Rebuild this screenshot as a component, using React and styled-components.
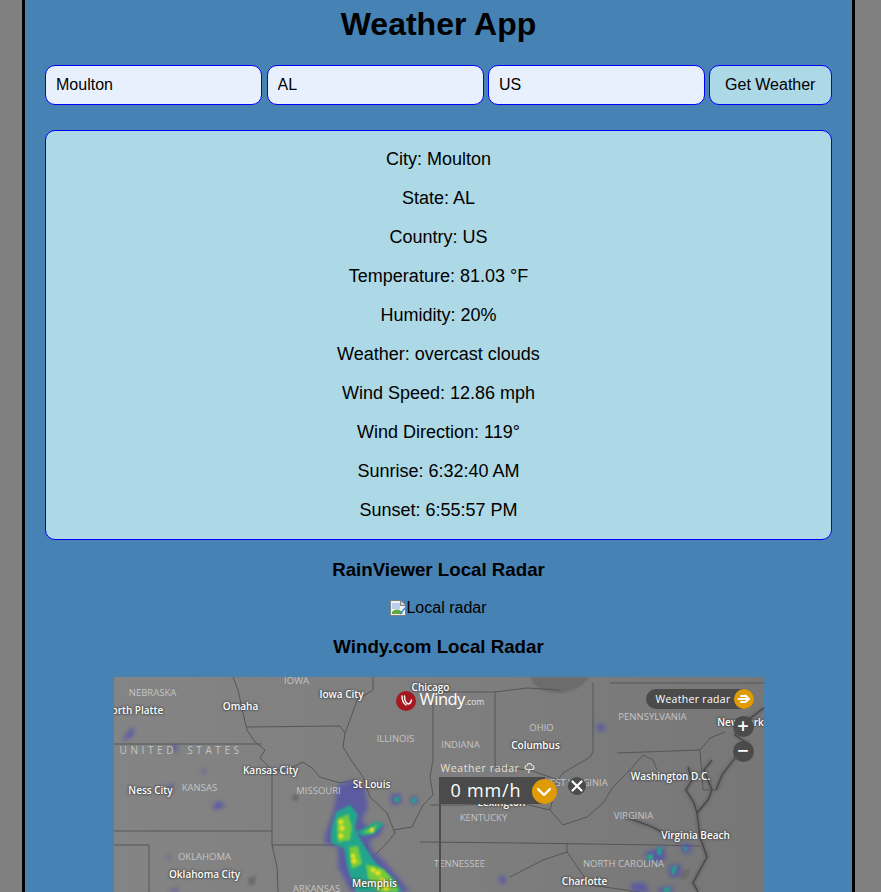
import React from 'react';
import styled, { createGlobalStyle } from 'styled-components';

const GlobalStyle = createGlobalStyle`
    html, body {
        margin: 0;
        height: 892px;
        overflow: hidden;
        background-color: #808080;
        font-family: "Liberation Sans", Arial, sans-serif;
    }
`

const readings = [
    'City: Moulton',
    'State: AL',
    'Country: US',
    'Temperature: 81.03 °F',
    'Humidity: 20%',
    'Weather: overcast clouds',
    'Wind Speed: 12.86 mph',
    'Wind Direction: 119°',
    'Sunrise: 6:32:40 AM',
    'Sunset: 6:55:57 PM',
]

// x / y are the label centres, relative to the map's top left corner
const cities = [
    ['North Platte', 20, 33],
    ['Omaha', 127, 29],
    ['Iowa City', 228, 17],
    ['Chicago', 317, 10],
    ['Columbus', 422, 68],
    ['Kansas City', 157, 93],
    ['Ness City', 37, 113],
    ['St Louis', 258, 107],
    ['Lexington', 388, 125],
    ['Washington D.C.', 557, 99],
    ['Virginia Beach', 582, 158],
    ['New York', 627, 45],
    ['Oklahoma City', 91, 197],
    ['Memphis', 261, 206],
    ['Charlotte', 471, 204],
]

const states = [
    ['NEBRASKA', 39, 16],
    ['IOWA', 183, 4],
    ['ILLINOIS', 282, 62],
    ['INDIANA', 347, 68],
    ['OHIO', 428, 51],
    ['PENNSYLVANIA', 539, 40],
    ['KANSAS', 86, 111],
    ['MISSOURI', 205, 114],
    ['WEST VIRGINIA', 461, 106],
    ['KENTUCKY', 370, 141],
    ['VIRGINIA', 520, 139],
    ['OKLAHOMA', 91, 180],
    ['TENNESSEE', 346, 187],
    ['NORTH CAROLINA', 510, 187],
    ['ARKANSAS', 203, 212],
]

const borders = [
    'M233 677 L238 690 L243 713 L247 730 L255 742 L265 750 L260 758 L272 770 L272 845',
    'M114 744 L262 744',
    'M247 727 L340 726 L345 733',
    'M272 770 L287 770 L303 762 L312 768 L320 777 L340 783 L355 780',
    'M373 677 L373 690 L357 700 L350 720 L345 733 L343 747 L353 763 L363 777 L370 797 L387 813 L395 833 L387 843 L370 860 L385 877 L400 890',
    'M114 831 L272 831',
    'M114 845 L149 845 L149 892',
    'M272 845 L367 845 L370 860',
    'M272 845 L277 867 L278 892',
    'M433 703 L433 760 L430 777 L433 795 L423 805 L412 827 L393 830',
    'M420 842 L520 843 L657 845 L700 846',
    'M437 692 L495 692 L527 688 L560 690',
    'M495 692 L495 753 L495 767',
    'M593 683 L593 752 L590 757 L563 773 L558 780 L550 810 L563 825 L587 817 L603 803 L613 787 L627 773 L643 755 L653 760 L657 770',
    'M617 753 L700 750 L703 790 L717 790',
    'M430 805 L463 805 L520 803 L550 810',
    'M495 767 L530 770 L558 780',
    'M510 877 L543 860 L567 852 L567 843',
    'M567 852 L590 885 L640 892',
    'M700 750 L710 738 L725 732',
    'M610 683 L764 683',
]

const coasts = [
    'M764 708 L745 722 L735 735 L747 743 L732 762 L722 775 L716 790',
    'M688 767 L692 780 L686 790 L694 803 L697 813 L700 837 L707 857 L700 870 L693 883 L698 892',
    'M712 760 L704 770 L712 790 L708 800 L697 813',
    'M668 835 L650 826 L625 817',
]

const lakes = [
    'M530 677 C534 688 546 694 562 693 C574 692 584 684 590 677 Z',
    'M295 793 L300 797 L296 802 L291 798 Z',
    'M248 878 L256 875 L255 884 L249 886 Z',
    'M680 872 L690 868 L688 878 L680 880 Z',
]

const blue = [
    'M338 785 L352 780 L365 788 L368 807 L362 820 L370 830 L385 823 L380 835 L369 841 L372 850 L385 862 L402 882 L410 892 L351 892 L338 867 L338 847 L324 843 L326 831 L333 813 Z',
    'M122 742 L127 732 L135 726 L133 736 Z',
    'M212 808 L218 800 L226 806 L216 810 Z',
    'M596 724 L606 725 L604 731 L598 731 Z',
    'M172 745 L178 744 L177 752 L173 752 Z',
    'M202 774 L205 766 L206 774 Z',
    'M166 785 L174 784 L172 790 Z',
    'M166 858 L171 855 L170 860 Z',
    'M170 890 L178 888 L178 892 L170 892 Z',
    'M390 795 L400 793 L402 803 L392 805 Z',
    'M410 797 L417 796 L418 804 L411 804 Z',
    'M498 876 L505 876 L506 884 L500 883 Z',
    'M644 853 L664 846 L666 860 L650 864 Z',
    'M668 866 L682 864 L680 876 L670 878 Z',
    'M680 844 L692 844 L690 854 L682 852 Z',
    'M630 884 L644 882 L650 892 L632 892 Z',
    'M658 888 L672 886 L674 892 L658 892 Z',
]

const teal = [
    'M336 812 L350 805 L358 815 L355 827 L359 837 L365 847 L375 862 L395 880 L402 892 L356 892 L348 870 L344 848 L331 843 L331 830 Z',
    'M357 832 L377 821 L384 824 L374 834 L363 836 Z',
    'M647 855 L653 854 L652 861 L648 860 Z',
    'M657 849 L662 846 L661 855 L658 855 Z',
    'M671 868 L677 865 L675 874 L672 874 Z',
    'M683 846 L688 848 L686 852 Z',
    'M394 797 L399 797 L399 802 L395 802 Z',
    'M412 798 L416 798 L416 803 L412 803 Z',
    'M664 888 L670 887 L670 892 L664 892 Z',
]

const green = [
    'M337 819 L348 814 L352 827 L350 840 L338 842 L337 830 Z',
    'M362 833 L378 824 L372 833 Z',
    'M349 847 L358 846 L362 864 L352 869 Z',
    'M366 864 L383 869 L396 883 L398 892 L378 892 L368 878 Z',
    'M650 856 L652 857 L651 859 Z',
]

const yellow = [
    [341, 822, 1.6],
    [342, 828, 1.8],
    [341, 836, 1.6],
    [353, 856, 1.5],
    [354, 861, 1.8],
    [373, 870, 1.6],
    [378, 873, 1.8],
    [382, 880, 1.8],
    [372, 830, 1.4],
    [386, 888, 2],
]

const App = () => {
    return (
        <>
            <GlobalStyle />
            <Container>
                <Title>Weather App</Title>
                <Form onSubmit={(e) => e.preventDefault()}>
                    <StyledInput name='city' defaultValue='Moulton' />
                    <StyledInput name='state' defaultValue='AL' />
                    <StyledInput name='country' defaultValue='US' />
                    <StyledButton type='submit'>Get Weather</StyledButton>
                </Form>
                <WeatherPanel>
                    {readings.map((line) => <Reading key={line}>{line}</Reading>)}
                </WeatherPanel>
                <SectionTitle>RainViewer Local Radar</SectionTitle>
                <BrokenImage>
                    <svg width='16' height='16' viewBox='0 0 16 16'>
                        <path d='M0.5 0.5 H10.5 L15.5 5.5 V15.5 H0.5 Z' fill='#eef1f5' stroke='#7d7d7d' />
                        <path d='M10.5 0.5 V5.5 H15.5' fill='#d4d9df' stroke='#7d7d7d' />
                        <path d='M2 3 H10 V9 H2 Z' fill='#b9cdf0' />
                        <path d='M2 14 V12 C5 9 8 9 11 11 L13 14 Z' fill='#5da83f' />
                        <path d='M10 14 L15 8' stroke='#4a86c8' strokeWidth='1.5' />
                    </svg>
                    Local radar
                </BrokenImage>
                <SectionTitle>Windy.com Local Radar</SectionTitle>
                <RadarMap>
                    <MapDrawing viewBox='114 677 650 450'>
                        <defs>
                            <linearGradient id='land' x1='0' x2='1' y1='0' y2='0'>
                                <stop offset='0' stopColor='#848484' />
                                <stop offset='0.55' stopColor='#7e7e7e' />
                                <stop offset='1' stopColor='#777777' />
                            </linearGradient>
                            <filter id='soft'><feGaussianBlur stdDeviation='1' /></filter>
                            <filter id='halo'><feGaussianBlur stdDeviation='1.6' /></filter>
                            <filter id='softer'><feGaussianBlur stdDeviation='2' /></filter>
                        </defs>
                        <rect x='114' y='677' width='650' height='450' fill='url(#land)' />
                        <g fill='#6c6c6c' filter='url(#soft)'>
                            {lakes.map((d) => <path key={d} d={d} />)}
                        </g>
                        <g fill='none' stroke='#666' strokeWidth='4' filter='url(#halo)'>
                            {coasts.map((d) => <path key={d} d={d} />)}
                        </g>
                        <g fill='none' stroke='#444' strokeWidth='1.2'>
                            {coasts.map((d) => <path key={d} d={d} />)}
                        </g>
                        <g fill='none' stroke='#565656' strokeWidth='1'>
                            {borders.map((d) => <path key={d} d={d} />)}
                        </g>
                        <g fill='#5654a8' opacity='0.85' filter='url(#softer)'>
                            {blue.map((d) => <path key={d} d={d} />)}
                        </g>
                        <g fill='#22a58c' filter='url(#soft)'>
                            {teal.map((d) => <path key={d} d={d} />)}
                        </g>
                        <g fill='#74cc3e' filter='url(#soft)'>
                            {green.map((d) => <path key={d} d={d} />)}
                        </g>
                        <g fill='#f2e21c' filter='url(#soft)'>
                            {yellow.map(([cx, cy, r]) => <circle key={`${cx}-${cy}`} cx={cx} cy={cy} r={r + 0.8} />)}
                        </g>
                    </MapDrawing>

                    <CountryLabel>UNITED STATES</CountryLabel>
                    {states.map(([name, x, y]) => (
                        <StateLabel key={name} $x={x} $y={y}>{name}</StateLabel>
                    ))}
                    {cities.map(([name, x, y]) => (
                        <CityLabel key={name} $x={x} $y={y}>{name}</CityLabel>
                    ))}

                    <Logo>
                        <svg width='20' height='20' viewBox='0 0 20 20'>
                            <circle cx='10' cy='10' r='10' fill='#a5181f' />
                            <path d='M6 5 C6 9 7 12 10 14 M8.5 5 C8.5 9 10 12 12 13 M12 13 C14 13 15 11 15.5 9' fill='none' stroke='#fff' strokeWidth='1.4' strokeLinecap='round' />
                        </svg>
                        <LogoName>Windy<LogoDomain>.com</LogoDomain></LogoName>
                    </Logo>

                    <MapControls>
                        <LayerPill>
                            Weather radar
                            <PillIcon>
                                <svg width='14' height='10' viewBox='0 0 14 10'>
                                    <path d='M1.5 5 H12 M8.5 1.5 L12 5 L8.5 8 M4 2 H8 M4 8 H8' fill='none' stroke='#fff' strokeWidth='1.9' strokeLinecap='round' />
                                </svg>
                            </PillIcon>
                        </LayerPill>
                        <ZoomStack>
                            <ZoomButton>+</ZoomButton>
                            <ZoomButton>−</ZoomButton>
                        </ZoomStack>
                    </MapControls>

                    <Picker>
                        <PickerTitle>
                            Weather radar
                            <svg width='11' height='12' viewBox='0 0 11 12'>
                                <path d='M3 7.5 C0.5 7.5 0.5 3.5 3 3.5 C3.5 0.8 7.5 0.8 8 3.5 C10.5 3.5 10.5 7.5 8 7.5 Z M5.5 7.5 L4.5 11' fill='none' stroke='#e6e0d4' strokeWidth='1.2' />
                            </svg>
                        </PickerTitle>
                        <PickerRow>
                            <PickerBox>0 mm/h</PickerBox>
                            <PickerToggle>
                                <svg width='16' height='10' viewBox='0 0 16 10'>
                                    <path d='M2 2 L8 8 L14 2' fill='none' stroke='#fff' strokeWidth='2.4' strokeLinecap='round' strokeLinejoin='round' />
                                </svg>
                            </PickerToggle>
                            <PickerClose>
                                <svg width='12' height='12' viewBox='0 0 12 12'>
                                    <path d='M1.5 1.5 L10.5 10.5 M10.5 1.5 L1.5 10.5' stroke='#fff' strokeWidth='2.2' strokeLinecap='round' />
                                </svg>
                            </PickerClose>
                        </PickerRow>
                        <PickerLine />
                    </Picker>
                </RadarMap>
            </Container>
        </>
    )
}

export default App;

const Container = styled.div`
    box-sizing: border-box;
    width: 833px;
    margin-left: 22px;
    min-height: 892px;
    padding: 6px 20px 20px;
    background-color: #4682b4;
    border-left: 3px solid #000;
    border-right: 3px solid #000;
    color: #000;
    text-align: center;
`
const Title = styled.h1`
    margin: 0 0 22px;
    font-size: 32px;
    line-height: 37px;
    font-weight: bold;
`
const Form = styled.form`
    display: flex;
    gap: 4.5px;
    height: 40px;
    margin-bottom: 25px;
`
const StyledInput = styled.input`
    flex: 0 0 217px;
    min-width: 0;
    box-sizing: border-box;
    padding: 0 10px;
    font-family: inherit;
    font-size: 16px;
    color: #000;
    background-color: #e8f0fe;
    border: 1px solid #0000ff;
    border-radius: 10px;
    outline: none;
`
const StyledButton = styled.button`
    flex: 1;
    box-sizing: border-box;
    margin-left: -1px;
    padding: 0;
    font-family: inherit;
    font-size: 16px;
    color: #000;
    background-color: #add8e6;
    border: 1px solid #0000ff;
    border-radius: 10px;
`
const WeatherPanel = styled.div`
    box-sizing: border-box;
    height: 410px;
    padding: 0 20px;
    overflow: hidden;
    background-color: #add8e6;
    border: 1px solid #0000ff;
    border-radius: 10px;
`
const Reading = styled.p`
    margin: 18px 0;
    font-size: 18px;
    line-height: 21px;
`
const SectionTitle = styled.h3`
    margin: 19px 0 18px;
    font-size: 18.72px;
    line-height: 22px;
    font-weight: bold;
`
const BrokenImage = styled.div`
    display: flex;
    justify-content: center;
    align-items: flex-end;
    height: 18px;
    font-size: 16px;
    line-height: 18px;
    color: #000;

    svg {
        margin-bottom: 1px;
    }
`
const RadarMap = styled.div`
    position: relative;
    width: 650px;
    height: 450px;
    margin: 19px auto 0;
    overflow: hidden;
    font-family: "Open Sans", "Noto Sans", sans-serif;
`
const MapDrawing = styled.svg`
    display: block;
    width: 650px;
    height: 450px;
`
const MapLabel = styled.span`
    position: absolute;
    left: ${(pr) => pr.$x}px;
    top: ${(pr) => pr.$y}px;
    transform: translate(-50%, -50%);
    white-space: nowrap;
    font-size: 10px;
    line-height: 12px;
`
const CityLabel = styled(MapLabel)`
    color: #fff;
    font-weight: 600;
    text-shadow: 0 0 2px #333, 0 0 3px #444;
`
const StateLabel = styled(MapLabel)`
    color: #c4c4c4;
    font-size: 9.5px;
`
const CountryLabel = styled.span`
    position: absolute;
    left: 6px;
    top: 67px;
    font-size: 10px;
    line-height: 12px;
    letter-spacing: 3.6px;
    word-spacing: 4px;
    color: #c4c4c4;
    white-space: nowrap;
`
const Logo = styled.div`
    position: absolute;
    left: 282px;
    top: 12px;
    display: flex;
    align-items: center;
    gap: 4px;
`
const LogoName = styled.span`
    font-size: 16.5px;
    line-height: 20px;
    letter-spacing: -0.5px;
    color: #fff;
`
const LogoDomain = styled.span`
    font-size: 8.5px;
    letter-spacing: 0;
    color: #e4e4e4;
`
const MapControls = styled.div`
    position: absolute;
    right: 10px;
    top: 12px;
    display: flex;
    flex-direction: column;
    align-items: flex-end;
    gap: 7px;
`
const LayerPill = styled.div`
    display: flex;
    align-items: center;
    gap: 3px;
    height: 20px;
    padding-left: 9px;
    border-radius: 10px;
    background-color: #4b4b4b;
    color: #fff;
    font-size: 10.5px;
    font-weight: 500;
    letter-spacing: 0.3px;
`
const PillIcon = styled.span`
    display: flex;
    align-items: center;
    justify-content: center;
    width: 20px;
    height: 20px;
    border-radius: 50%;
    background-color: #df9b05;
`
const ZoomStack = styled.div`
    display: flex;
    flex-direction: column;
    gap: 4px;
`
const ZoomButton = styled.div`
    width: 21px;
    height: 21px;
    border-radius: 50%;
    background-color: #4b4b4b;
    color: #fff;
    font-size: 20px;
    font-weight: 600;
    line-height: 20px;
`
const Picker = styled.div`
    position: absolute;
    left: 325px;
    top: 81px;
    bottom: 0;
    display: flex;
    flex-direction: column;
    align-items: flex-start;
`
const PickerTitle = styled.div`
    display: flex;
    align-items: center;
    gap: 4px;
    height: 19px;
    padding-left: 2px;
    color: #e6e0d4;
    font-size: 10.5px;
    font-weight: 500;
    letter-spacing: 0.6px;
    white-space: nowrap;
`
const PickerRow = styled.div`
    display: flex;
    height: 27px;
`
const PickerBox = styled.div`
    box-sizing: border-box;
    width: 106px;
    padding-left: 12px;
    background-color: #4b4b4b;
    color: #fff;
    font-size: 18px;
    line-height: 27px;
    letter-spacing: 0.8px;
    text-align: left;
    white-space: nowrap;
`
const PickerToggle = styled.div`
    display: flex;
    align-items: center;
    justify-content: center;
    align-self: flex-end;
    width: 25px;
    height: 25px;
    margin-left: -13px;
    border-radius: 50%;
    background-color: #df9b05;
`
const PickerClose = styled.div`
    display: flex;
    align-items: center;
    justify-content: center;
    width: 18px;
    height: 18px;
    margin-left: 11px;
    border-radius: 50%;
    background-color: #4b4b4b;
`
const PickerLine = styled.div`
    flex: 1;
    width: 2px;
    background-color: #4d4d4d;
`
